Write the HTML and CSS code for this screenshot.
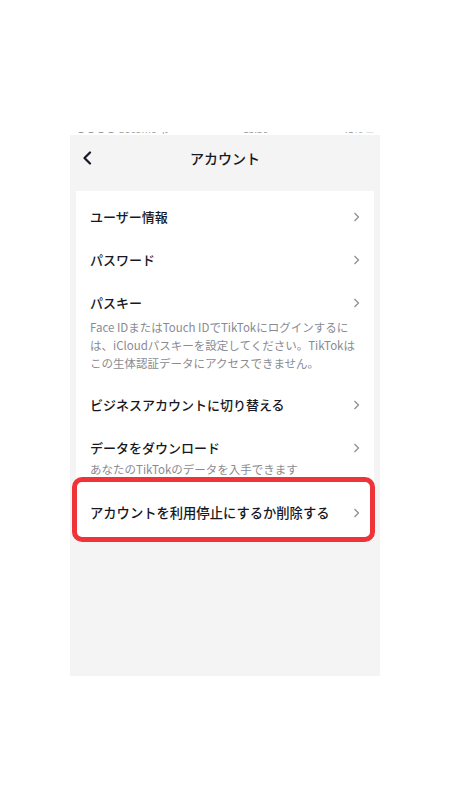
FILE: index.html
```html
<!DOCTYPE html>
<html lang="ja">
<head>
<meta charset="utf-8">
<title>アカウント</title>
<link rel="stylesheet" href="styles.css">
</head>
<body>
<div class="screen">
  <div class="status">
    <span class="status-text">●●●● docomo 令</span>
    <span class="status-text">15:30</span>
    <span class="status-text">41% ▭</span>
  </div>
  <div class="phone">
    <div class="header">
      <span class="back">
        <svg width="10" height="14" viewBox="0 0 10 14"><path d="M8 1.5 L2.5 7 L8 12.5" fill="none" stroke="#161823" stroke-width="2.2" stroke-linecap="round" stroke-linejoin="round"/></svg>
      </span>
      <span class="title">アカウント</span>
      <span></span>
    </div>
    <div class="card">
      <div class="item">
        <div class="row"><span class="label">ユーザー情報</span><span class="chev"><svg width="7" height="10" viewBox="0 0 7 10"><path d="M1.5 1 L5.5 5 L1.5 9" fill="none" stroke="#8a8b91" stroke-width="1.2"/></svg></span></div>
      </div>
      <div class="item">
        <div class="row"><span class="label">パスワード</span><span class="chev"><svg width="7" height="10" viewBox="0 0 7 10"><path d="M1.5 1 L5.5 5 L1.5 9" fill="none" stroke="#8a8b91" stroke-width="1.2"/></svg></span></div>
      </div>
      <div class="item">
        <div class="row"><span class="label">パスキー</span><span class="chev"><svg width="7" height="10" viewBox="0 0 7 10"><path d="M1.5 1 L5.5 5 L1.5 9" fill="none" stroke="#8a8b91" stroke-width="1.2"/></svg></span></div>
        <div class="desc">Face IDまたはTouch IDでTikTokにログインするに<br>は、iCloudパスキーを設定してください。TikTokは<br>この生体認証データにアクセスできません。</div>
      </div>
      <div class="item">
        <div class="row"><span class="label">ビジネスアカウントに切り替える</span><span class="chev"><svg width="7" height="10" viewBox="0 0 7 10"><path d="M1.5 1 L5.5 5 L1.5 9" fill="none" stroke="#8a8b91" stroke-width="1.2"/></svg></span></div>
      </div>
      <div class="item item-sub">
        <div class="row"><span class="label">データをダウンロード</span><span class="chev"><svg width="7" height="10" viewBox="0 0 7 10"><path d="M1.5 1 L5.5 5 L1.5 9" fill="none" stroke="#8a8b91" stroke-width="1.2"/></svg></span></div>
        <div class="sub">あなたのTikTokのデータを入手できます</div>
      </div>
      <div class="item item-marked">
        <div class="row"><span class="label label-big">アカウントを利用停止にするか削除する</span><span class="chev"><svg width="7" height="10" viewBox="0 0 7 10"><path d="M1.5 1 L5.5 5 L1.5 9" fill="none" stroke="#8a8b91" stroke-width="1.2"/></svg></span></div>
      </div>
    </div>
  </div>
</div>
</body>
</html>
```

FILE: styles.css
```css
* { box-sizing: border-box; }
html, body { margin: 0; padding: 0; background: #ffffff; }
body {
  font-family: "Noto Sans CJK JP", "Noto Sans", sans-serif;
  color: #161823;
}
.screen {
  width: 450px;
  height: 800px;
  padding-top: 132px;
  background: #ffffff;
}
.status {
  margin-left: 70px;
  width: 310px;
  height: 3px;
  overflow: hidden;
  display: flex;
  justify-content: space-between;
  padding: 0 6px 0 6px;
}
.status-text {
  font-size: 10px;
  line-height: 10px;
  margin-top: -8px;
  color: #9a9a9a;
  font-weight: 400;
}
.phone {
  margin-left: 70px;
  width: 310px;
  height: 541px;
  background: #f4f4f4;
  display: flex;
  flex-direction: column;
}
.header {
  height: 46px;
  display: grid;
  grid-template-columns: 1fr auto 1fr;
  align-items: center;
  padding: 0 12px;
}
.back { display: flex; align-items: center; }
.title {
  font-size: 14px;
  font-weight: 500;
  line-height: 20px;
}
.card {
  margin: 10px 6px 0 6px;
  background: #ffffff;
  padding: 4px 14px 6px 14px;
}
.item {
  padding: 12px 0 11px 0;
  position: relative;
}
.row {
  height: 20px;
  display: flex;
  align-items: center;
  justify-content: space-between;
}
.label {
  font-size: 13px;
  font-weight: 500;
  line-height: 20px;
  white-space: nowrap;
}
.label-big { font-size: 13.3px; }
.chev { display: flex; align-items: center; width: 7px; }
.desc {
  margin-top: 5px;
  font-size: 11.5px;
  line-height: 18px;
  color: #8a8b91;
  white-space: nowrap;
}
.item-sub { padding-bottom: 14px; }
.sub {
  margin-top: 3px;
  font-size: 11.5px;
  line-height: 16px;
  color: #8a8b91;
  white-space: nowrap;
}
.item-marked::after {
  content: "";
  position: absolute;
  left: -18px;
  right: -15px;
  top: -14px;
  bottom: -8px;
  border: 5px solid #ef3339;
  border-radius: 10px;
}
```
